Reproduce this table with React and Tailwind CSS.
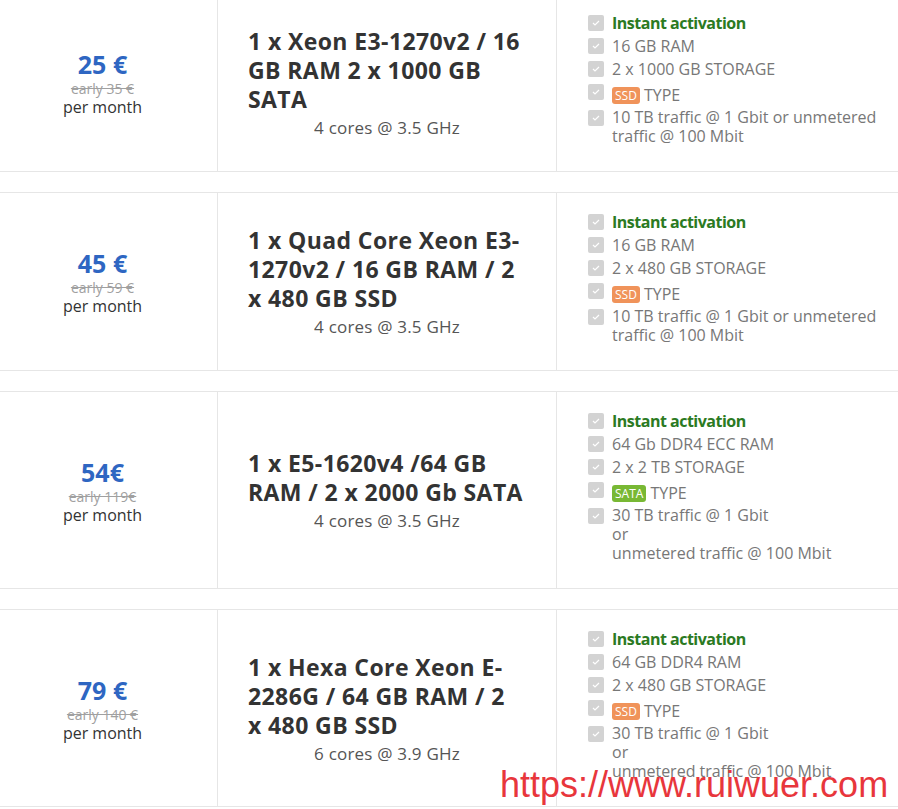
import React from 'react';

const plans = [
  {
    price: '25 €',
    early: 'early 35 €',
    title: '1 x Xeon E3-1270v2 / 16 GB RAM 2 x 1000 GB SATA',
    cores: '4 cores @ 3.5 GHz',
    ram: '16 GB RAM',
    storage: '2 x 1000 GB STORAGE',
    type: 'SSD',
    traffic: ['10 TB traffic @ 1 Gbit or unmetered traffic @ 100 Mbit'],
  },
  {
    price: '45 €',
    early: 'early 59 €',
    title: '1 x Quad Core Xeon E3-1270v2 / 16 GB RAM / 2 x 480 GB SSD',
    cores: '4 cores @ 3.5 GHz',
    ram: '16 GB RAM',
    storage: '2 x 480 GB STORAGE',
    type: 'SSD',
    traffic: ['10 TB traffic @ 1 Gbit or unmetered traffic @ 100 Mbit'],
  },
  {
    price: '54€',
    early: 'early 119€',
    title: '1 x E5-1620v4 /64 GB RAM / 2 x 2000 Gb SATA',
    cores: '4 cores @ 3.5 GHz',
    ram: '64 Gb DDR4 ECC RAM',
    storage: '2 x 2 TB STORAGE',
    type: 'SATA',
    traffic: ['30 TB traffic @ 1 Gbit', 'or', 'unmetered traffic @ 100 Mbit'],
  },
  {
    price: '79 €',
    early: 'early 140 €',
    title: '1 x Hexa Core Xeon E-2286G / 64 GB RAM / 2 x 480 GB SSD',
    cores: '6 cores @ 3.9 GHz',
    ram: '64 GB DDR4 RAM',
    storage: '2 x 480 GB STORAGE',
    type: 'SSD',
    traffic: ['30 TB traffic @ 1 Gbit', 'or', 'unmetered traffic @ 100 Mbit'],
  },
];

function Check() {
  return (
    <span className="mt-[2px] flex h-4 w-4 shrink-0 items-center justify-center rounded-[2px] bg-[#d3d3d3]">
      <svg width="8" height="6" viewBox="0 0 8 6" fill="none">
        <path d="M1 3l2 2 4-4" stroke="#fff" strokeWidth="1.2" />
      </svg>
    </span>
  );
}

function Feature({ children, tall }) {
  return (
    <li className={`mb-[3px] flex gap-2 ${tall ? 'mt-[1px]' : ''}`}>
      <Check />
      <div className={`leading-[20px] ${tall ? 'pt-[3px]' : ''}`}>{children}</div>
    </li>
  );
}

function PlanRow({ plan, first }) {
  const badge =
    plan.type === 'SSD' ? 'bg-[#f0935a]' : 'bg-[#78b834]';

  return (
    <div className={`grid grid-cols-[217px_340px_1fr] border-y border-[#e6e6e6] ${first ? '-mt-[7px]' : 'mt-5'}`}>
      {/* Price */}
      <div className="flex flex-col items-center justify-center pr-3 text-center">
        <div className="text-[25px] font-bold leading-[32px] text-[#2e66c2]">{plan.price}</div>
        <div className="text-[14px] leading-[17px] text-[#a0a0a0] line-through">{plan.early}</div>
        <div className="text-[16px] leading-[20px] text-[#333]">per month</div>
      </div>

      {/* Title */}
      <div className="flex flex-col justify-center border-x border-[#e6e6e6] pl-[30px] pr-[33px]">
        <h3 className="text-[23px] font-bold leading-[29px] tracking-[0.4px] text-[#333]">{plan.title}</h3>
        <p className="mt-[4px] pl-[3px] text-center text-[17px] leading-[20px] tracking-[0.2px] text-[#555]">{plan.cores}</p>
      </div>

      {/* Features */}
      <div className="pb-[22px] pl-[31px] pr-3 pt-[19px] text-[16px] text-[#777]">
        <ul>
          <Feature>
            <span className="font-bold tracking-[-0.5px] text-[#2b7a22]">Instant activation</span>
          </Feature>
          <Feature>{plan.ram}</Feature>
          <Feature>{plan.storage}</Feature>
          <Feature tall>
            <span className={`mr-1 inline-block rounded-[3px] px-[3px] align-[1px] text-[12px] leading-[17px] text-white ${badge}`}>
              {plan.type}
            </span>
            TYPE
          </Feature>
          <Feature>
            {plan.traffic.map((t) => (
              <div key={t} className="leading-[19px]">{t}</div>
            ))}
          </Feature>
        </ul>
      </div>
    </div>
  );
}

export default function App() {
  return (
    <div className="relative h-[809px] w-[898px] overflow-hidden bg-white font-['Open_Sans',sans-serif]">
      {plans.map((p, i) => (
        <PlanRow key={p.price} plan={p} first={i === 0} />
      ))}
      <div className="absolute left-[500px] top-[763px] font-['Liberation_Sans',sans-serif] text-[36px] leading-[44px] text-[#e8363c]">
        https://www.ruiwuer.com
      </div>
    </div>
  );
}
